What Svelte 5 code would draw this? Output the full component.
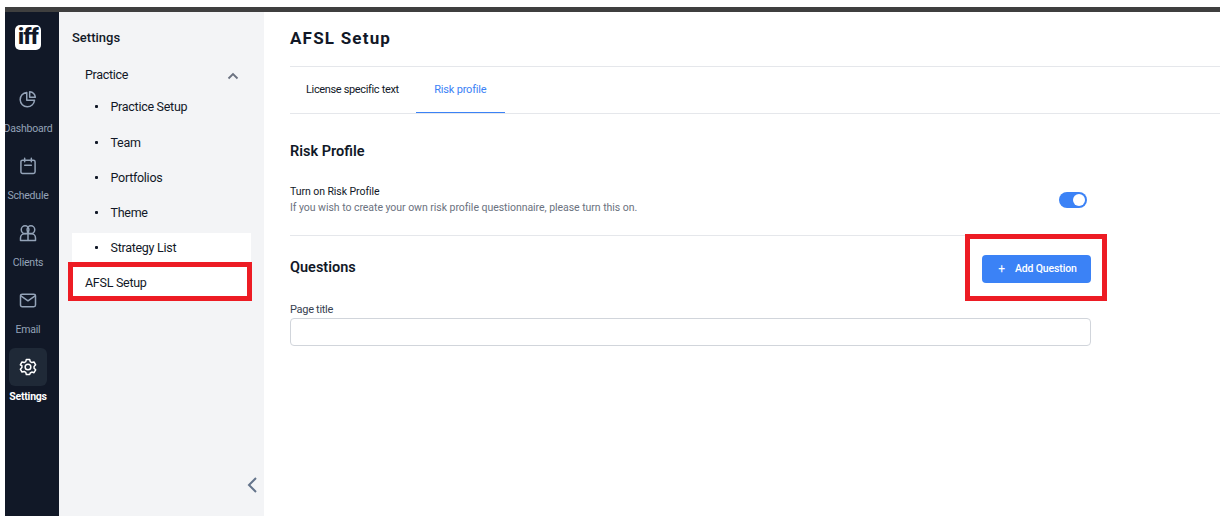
<script>
  const rail = [
    { label: 'Dashboard', icon: 'dash' },
    { label: 'Schedule', icon: 'cal' },
    { label: 'Clients', icon: 'users' },
    { label: 'Email', icon: 'mail' },
    { label: 'Settings', icon: 'gear', active: true }
  ];
  const sub = ['Practice Setup', 'Team', 'Portfolios', 'Theme', 'Strategy List'];
</script>

<div class="page">
  <div class="topbar"></div>
  <div class="shell">
    <nav class="rail">
      <div class="logo">iff</div>
      <ul class="rail-list">
        {#each rail as item}
          <li class="rail-item" class:active={item.active}>
            <span class="rail-icon">
              <svg width="20" height="20" viewBox="0 0 24 24" fill="none" stroke="currentColor" stroke-width="1.8" stroke-linecap="round" stroke-linejoin="round">
                {#if item.icon === 'dash'}
                  <path d="M10.5 4.2a8.6 8.6 0 1 0 9.3 9.3H10.5z" />
                  <path d="M14 3.2a7.6 7.6 0 0 1 6.8 6.8H14z" />
                {:else if item.icon === 'cal'}
                  <rect x="3.5" y="5" width="17" height="16" rx="2" />
                  <path d="M8 2.8V7M16 2.8V7M8 11h8" />
                {:else if item.icon === 'users'}
                  <circle cx="8.5" cy="8" r="4.6" />
                  <circle cx="15.5" cy="8" r="4.6" />
                  <path d="M3 21v-3a5 5 0 0 1 5-5h8a5 5 0 0 1 5 5v3zM12 14v7" />
                {:else if item.icon === 'mail'}
                  <rect x="3" y="5" width="18" height="15" rx="2" />
                  <path d="M3.5 7l8.5 6 8.5-6" />
                {:else}
                  <path d="M10 3h4l.7 2.6 1.9 1.1 2.6-.7 2 3.4-1.9 1.9v2.2l1.9 1.9-2 3.4-2.6-.7-1.9 1.1L14 21h-4l-.7-2.6-1.9-1.1-2.6.7-2-3.4 1.9-1.9v-2.2L2.8 9.4l2-3.4 2.6.7 1.9-1.1z" />
                  <circle cx="12" cy="12" r="3.4" />
                {/if}
              </svg>
            </span>
            <span class="rail-label">{item.label}</span>
          </li>
        {/each}
      </ul>
    </nav>

    <aside class="panel">
      <h2 class="panel-title">Settings</h2>
      <div class="group-head">
        <span>Practice</span>
        <svg width="12" height="8" viewBox="0 0 12 8" fill="none" stroke="#6b7280" stroke-width="1.8"><path d="M1.5 6.5 6 2l4.5 4.5" /></svg>
      </div>
      <ul class="sub-list">
        {#each sub as s}
          <li class="sub-item" class:white={s === 'Strategy List'}><span class="dot"></span>{s}</li>
        {/each}
      </ul>
      <div class="afsl">AFSL Setup</div>
      <button class="collapse" aria-label="Collapse">
        <svg width="12" height="18" viewBox="0 0 12 18" fill="none" stroke="#64748b" stroke-width="2"><path d="M10 2 3 9l7 7" /></svg>
      </button>
    </aside>

    <main class="main">
      <h1 class="title">AFSL Setup</h1>
      <div class="tabs">
        <div class="tab">License specific text</div>
        <div class="tab current">Risk profile</div>
      </div>
      <div class="content">
        <h3 class="sec-risk">Risk Profile</h3>
        <div class="toggle-row">
          <div>
            <div class="t-label">Turn on Risk Profile</div>
            <div class="t-help">If you wish to create your own risk profile questionnaire, please turn this on.</div>
          </div>
          <span class="switch"><span class="knob"></span></span>
        </div>
        <div class="q-row">
          <h3>Questions</h3>
          <button class="add"><span class="plus">+</span>Add Question</button>
        </div>
        <label class="field-label" for="pt">Page title</label>
        <input id="pt" class="field" />
      </div>
    </main>
  </div>
  <div class="mark mark-a"></div>
  <div class="mark mark-b"></div>
</div>

<style>
  :global(body) { margin: 0; background: #fff; }
  * { box-sizing: border-box; }
  .page { position: relative; width: 1220px; height: 516px; padding-top: 7px; overflow: hidden; font-family: Roboto, "Liberation Sans", sans-serif; color: #111827; }
  .topbar { height: 5px; margin-left: 5px; background: #3f3f3f; }
  .shell { display: flex; height: 504px; margin-left: 5px; }
  .rail { width: 54px; background: #111827; display: flex; flex-direction: column; align-items: center; padding: 13px 8px 0 0; flex: none; overflow: hidden; }
  .logo { width: 26px; height: 25px; background: #fff; border-radius: 5px; color: #111827; font-weight: 900; font-size: 22px; font-variant-ligatures: none; letter-spacing: -0.7px; line-height: 24px; text-align: center; }
  .rail-list { list-style: none; margin: 30px 0 0; padding: 0; width: 46px; }
  .rail-item { height: 67px; display: flex; flex-direction: column; align-items: center; color: #94a3b8; }
  .rail-icon { width: 38px; height: 38px; flex: none; border-radius: 6px; display: flex; align-items: center; justify-content: center; }
  .rail-label { font-size: 10.5px; font-weight: 450; letter-spacing: -0.22px; line-height: 14px; margin-top: 4px; white-space: nowrap; }
  .rail-item.active { color: #fff; }
  .rail-item.active .rail-icon { background: #1f2937; }
  .rail-item.active .rail-label { font-weight: 700; }
  .panel { position: relative; width: 205px; flex: none; background: #f3f4f6; padding: 17px 13px 0; }
  .panel-title { margin: 0; font-size: 13px; font-weight: 500; line-height: 18px; }
  .group-head { display: flex; justify-content: space-between; align-items: center; height: 20px; margin-top: 17px; padding: 0 12px 0 13px; font-size: 12.5px; font-weight: 440; letter-spacing: -0.32px; }
  .group-head svg { margin-top: 4px; }
  .sub-list { list-style: none; margin: 8px 0 0; padding: 0; }
  .sub-item { display: flex; align-items: center; height: 28px; margin-bottom: 7px; padding-left: 23px; font-size: 12.5px; font-weight: 440; letter-spacing: -0.28px; }
  .sub-item:first-child { margin-bottom: 8px; }
  .sub-item:last-child { margin-bottom: 0; }
  .sub-item.white { background: #fff; }
  .dot { width: 3px; height: 3px; border-radius: 1px; background: #111827; margin-right: 12.5px; }
  .afsl { height: 36px; line-height: 32px; padding: 6px 0 0 13px; background: #fff; font-size: 12.5px; font-weight: 440; letter-spacing: -0.28px; }
  .collapse { position: absolute; right: 6px; bottom: 22px; padding: 0; border: 0; background: none; display: flex; }
  .main { flex: 1; padding-left: 26px; }
  .title { margin: 0; font-size: 17px; font-weight: 700; letter-spacing: 1.2px; line-height: 20px; padding-top: 16px; height: 55px; border-bottom: 1px solid #e5e7eb; }
  .tabs { display: flex; height: 47px; border-bottom: 1px solid #e5e7eb; }
  .tab { padding: 0 16px; font-size: 11px; font-weight: 440; letter-spacing: -0.35px; line-height: 45px; }
  .tab.current { color: #3b82f6; font-weight: 400; margin-left: 1px; padding: 0 18.5px; letter-spacing: -0.2px; border-bottom: 1px solid #3b82f6; height: 46px; }
  .content { width: 801px; }
  .sec-risk { margin: 29px 0 0; font-size: 14.5px; font-weight: 600; line-height: 18px; }
  .toggle-row { display: flex; justify-content: space-between; align-items: center; padding: 24px 4px 19px 0; border-bottom: 1px solid #e5e7eb; width: 801px; }
  .t-label { font-size: 10.5px; font-weight: 420; letter-spacing: -0.06px; line-height: 14px; }
  .t-help { font-size: 10.5px; letter-spacing: -0.04px; line-height: 17px; color: #6b7280; }
  .switch { width: 28px; height: 16px; margin-top: -2px; border-radius: 8px; background: #3b82f6; display: flex; align-items: center; justify-content: flex-end; padding-right: 2px; }
  .knob { width: 12px; height: 12px; border-radius: 50%; background: #fff; }
  .q-row { display: flex; justify-content: space-between; align-items: center; height: 66px; }
  .q-row h3 { margin: 0 0 4px; font-size: 14.5px; font-weight: 600; }
  .add { width: 109px; height: 28px; background: #3b82f6; color: #fff; border: 0; border-radius: 4px; font: 500 10.5px Roboto, sans-serif; letter-spacing: -0.15px; display: flex; align-items: center; justify-content: center; padding: 0 0 2px 2px; }
  .plus { font-size: 12px; font-weight: 400; margin: 2px 10px 0 0; }
  .field-label { display: block; font-size: 11px; letter-spacing: -0.3px; line-height: 14px; color: #374151; margin-top: 1px; }
  .field { display: block; width: 801px; height: 28px; margin-top: 1px; border: 1px solid #d1d5db; border-radius: 4px; background: #fff; }
  .mark { position: absolute; border: 5px solid #ed1c24; pointer-events: none; }
  .mark-a { left: 68px; top: 262px; width: 184px; height: 39px; }
  .mark-b { left: 965px; top: 234px; width: 142px; height: 67px; }
</style>
